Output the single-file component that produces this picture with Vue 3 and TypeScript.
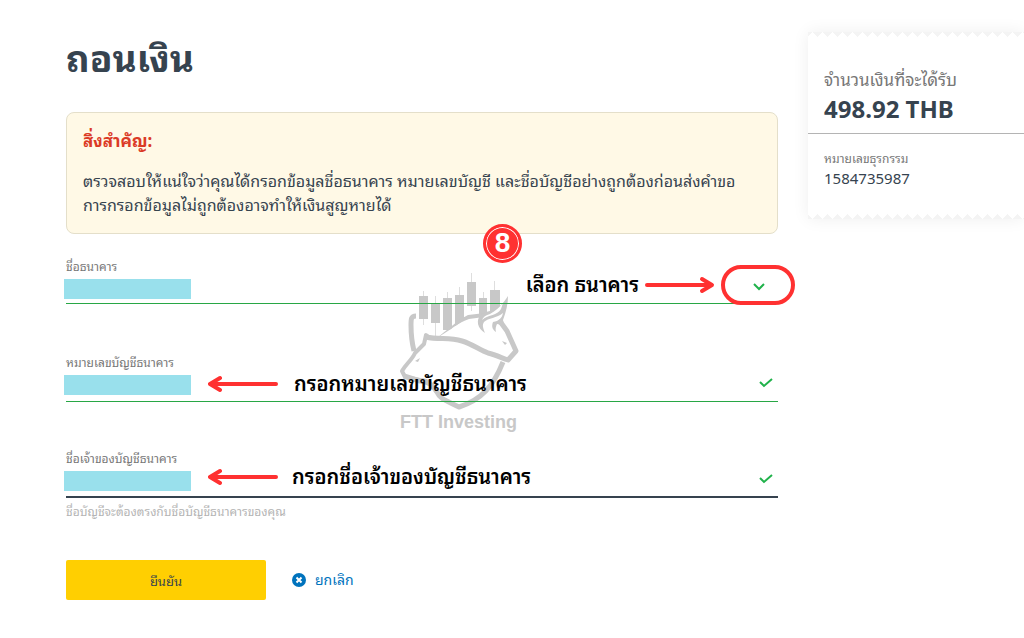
<script setup lang="ts">
import { ref } from 'vue'

const bank = ref('')
const accountNumber = ref('')
const accountHolder = ref('')
</script>

<template>
  <div class="page">
    <main class="content">
      <h1>ถอนเงิน</h1>

      <section class="notice">
        <h2>สิ่งสำคัญ:</h2>
        <p>
          ตรวจสอบให้แน่ใจว่าคุณได้กรอกข้อมูลชื่อธนาคาร หมายเลขบัญชี และชื่อบัญชีอย่างถูกต้องก่อนส่งคำขอ<br />
          การกรอกข้อมูลไม่ถูกต้องอาจทำให้เงินสูญหายได้
        </p>
      </section>

      <form class="form" @submit.prevent>
        <svg class="watermark" viewBox="0 0 120 165" aria-hidden="true">
          <path fill="#dedede" d="M23 19h1v34h-1zM35 24h1v42h-1zM47 20h1v40h-1zM59 15h1v35h-1zM71 1h1v38h-1zM83 20h1v25h-1zM94 9h1v30h-1z" />
          <path fill="#c8c8c8" d="M19 24h9v23h-9zM31 31h9v20h-9zM43 26h9v32h-9zM55 23h9v31h-9zM67 10h9v24h-9zM79 26h8v20h-8zM90 18h10v22h-10z" />
          <path fill="#fff" d="M34 66L51 57 67 46 84 43 97 38 108 25 103 43 108 58 117 78 108 88 60 68z" />
          <g fill="none" stroke="#c8c8c8" stroke-width="5" stroke-linejoin="round">
            <path d="M16 44c-5 0-5 3-5 9 0 9 1 18 3 26" />
            <path d="M26 65c13 3 23 0 36 4 10 3 18 9 26 12 8 2 14 5 20 7l8-9-9-20-8-11" />
            <path stroke-width="4" d="M30 66l-4-3-2 9-9 9c-3 7-9 11-13 18l3 6 15 3c9 0 13 5 17 12" />
            <path d="M4 104l16 5c9 0 13 5 17 11 3 7 8 8 22 15 22-7 34-20 44-45" />
          </g>
          <path fill="#c8c8c8" d="M35 67c12-8 22-19 33-24l17-2-1 4-15 2c-12 4-21 13-34 20z" />
          <path fill="#c8c8c8" d="M108 24c-5 8-9 12-18 15-9 2-13 6-12 13 1 4 3 6 7 9-2-5-3-8-1-11 4-4 13-4 19-9-1 5-4 8-10 9-2 5 0 8 3 10-1-3 0-6 1-8 4 0 6 4 9 8l-3-12c3-8 5-16 5-24z" />
          <path fill="#fff" d="M103 31c-4 5-8 8-13 11-4 1-7 3-8 6 7-6 15-4 19-11z" />
          <path fill="#c8c8c8" d="M15 89l5-3-2 4zM102 69l5 2-2 2z" />
          <text x="0" y="156">FTT Investing</text>
        </svg>

        <div class="field">
          <label for="bank">ชื่อธนาคาร</label>
          <div class="control">
            <select id="bank" v-model="bank"><option value=""></option></select>
            <span class="mask"></span>
            <svg class="mark chevron" viewBox="0 0 14 10"><path d="M2 2l5 5 5-5" /></svg>
          </div>
        </div>
        <div class="field">
          <label for="number">หมายเลขบัญชีธนาคาร</label>
          <div class="control">
            <input id="number" v-model="accountNumber" type="text" />
            <span class="mask"></span>
            <svg class="mark" viewBox="0 0 14 10"><path d="M1 4l4 4 8-7" /></svg>
          </div>
        </div>
        <div class="field active">
          <label for="holder">ชื่อเจ้าของบัญชีธนาคาร</label>
          <div class="control">
            <input id="holder" v-model="accountHolder" type="text" aria-describedby="hint" />
            <span class="mask"></span>
            <svg class="mark" viewBox="0 0 14 10"><path d="M1 4l4 4 8-7" /></svg>
          </div>
          <small id="hint">ชื่อบัญชีจะต้องตรงกับชื่อบัญชีธนาคารของคุณ</small>
        </div>

        <div class="actions">
          <button class="confirm" type="submit">ยืนยัน</button>
          <button class="cancel" type="button">
            <svg viewBox="0 0 14 14" width="14" height="14"><circle cx="7" cy="7" r="7" fill="#0073bd" /><path d="M4.5 4.5l5 5m0-5l-5 5" stroke="#fff" stroke-width="2" /></svg>
            ยกเลิก
          </button>
        </div>

        <div class="step">8</div>
        <div class="note note-bank">
          <span>เลือก ธนาคาร</span>
          <svg class="arrow" viewBox="0 0 70 20"><path d="M2 10h64M57 4l10 6-10 6" /></svg>
          <i class="ring"></i>
        </div>
        <div class="note note-number">
          <svg class="arrow" viewBox="0 0 70 20"><path d="M68 10H4M12 4L2 10l10 6" /></svg>
          <span>กรอกหมายเลขบัญชีธนาคาร</span>
        </div>
        <div class="note note-holder">
          <svg class="arrow" viewBox="0 0 70 20"><path d="M68 10H4M12 4L2 10l10 6" /></svg>
          <span>กรอกชื่อเจ้าของบัญชีธนาคาร</span>
        </div>
      </form>
    </main>

    <aside class="receipt">
      <div class="total">
        <span>จำนวนเงินที่จะได้รับ</span>
        <strong>498.92 THB</strong>
      </div>
      <div class="transaction">
        <span>หมายเลขธุรกรรม</span>
        <b>1584735987</b>
      </div>
    </aside>
  </div>
</template>

<style>
body { margin: 0; background: #fff; overflow-x: hidden; }
</style>

<style scoped>
* { box-sizing: border-box; }
.page {
  --sans: "Noto Sans", "Noto Sans Thai Looped", "Noto Looped Thai", Loma, Waree, Garuda, "Noto Sans Thai", sans-serif;
  display: flex;
  align-items: flex-start;
  gap: 30px;
  padding: 32px 0 38px 66px;
  color: #36434f;
  font-family: var(--sans);
}
.content { flex: 1; min-width: 0; }
h1 { margin: 0 0 28px; font-size: 37px; line-height: 52px; font-weight: 700; }
.notice {
  padding: 16px;
  border: 1px solid #e4dfca;
  border-radius: 8px;
  background: #fff9e6;
}
.notice h2 { margin: 0 0 16px; color: #db3b26; font-size: 17px; line-height: 24px; }
.notice p { margin: 0; font-size: 16px; line-height: 24px; }
.form { position: relative; padding-top: 24px; }
.field { height: 96px; }
.field label { display: block; font-size: 12px; line-height: 18px; color: #777; }
.control { position: relative; }
.control input, .control select {
  display: block;
  width: 100%;
  height: 28px;
  padding: 0;
  border: 0;
  border-bottom: 1px solid #28a745;
  border-radius: 0;
  outline: 0;
  appearance: none;
  background: transparent;
  font: inherit;
}
.control input { height: 30px; }
.field.active input { border-bottom: 2px solid #36434f; }
.field small { display: block; margin-top: 5px; font-size: 12px; line-height: 18px; color: #b4b4b4; }
.mask { position: absolute; left: -2px; top: 3px; width: 127px; height: 20px; background: #99e0ec; }
.mark { position: absolute; right: 5px; top: 6px; width: 14px; height: 10px; fill: none; stroke: #20b24b; stroke-width: 2; }
.mark.chevron { right: 12px; }
.actions { display: flex; align-items: center; gap: 26px; margin-top: 14px; }
.confirm { width: 200px; height: 40px; border: 0; border-radius: 2px; background: #ffcf01; color: #36434f; font: 13px var(--sans); }
.cancel { display: flex; align-items: center; gap: 9px; padding: 0; border: 0; background: none; color: #0073bd; font: 14px/20px var(--sans); }
.watermark { position: absolute; left: 334px; top: 38px; width: 120px; height: 165px; overflow: visible; }
.watermark text { fill: #c8c8c8; font: 700 18px "Liberation Sans", sans-serif; }
.step {
  position: absolute;
  left: 417px;
  top: -10px;
  width: 39px;
  height: 39px;
  border: 3px solid #ff3131;
  border-radius: 50%;
  background: #ff3131;
  box-shadow: inset 0 0 0 1px #fff;
  color: #fff;
  font: 700 28px/32px "Liberation Sans", sans-serif;
  text-align: center;
}
.note { position: absolute; display: flex; align-items: center; color: #000; font-size: 20px; line-height: 30px; font-weight: 600; white-space: nowrap; }
.arrow { width: 70px; height: 20px; fill: none; stroke: #ff3131; stroke-width: 4; stroke-linecap: round; stroke-linejoin: round; }
.note-bank { right: -17px; top: 31px; gap: 6px; }
.ring { width: 74px; height: 40px; border: 4px solid #ff3131; border-radius: 20px; }
.note-number { left: 142px; top: 135px; gap: 16px; }
.note-holder { left: 142px; top: 228px; gap: 14px; }
.receipt {
  width: 216px;
  min-height: 187px;
  background:
    linear-gradient(135deg, #f4f4f4 25%, transparent 25%) 0 0 / 10px 10px repeat-x,
    linear-gradient(225deg, #f4f4f4 25%, transparent 25%) 0 0 / 10px 10px repeat-x,
    linear-gradient(45deg, #f4f4f4 25%, transparent 25%) 0 100% / 10px 10px repeat-x,
    linear-gradient(315deg, #f4f4f4 25%, transparent 25%) 0 100% / 10px 10px repeat-x,
    #fff;
  box-shadow: 0 0 16px #0001;
}
.total { padding: 36px 16px 7px; border-bottom: 1px solid #b4b4b4; }
.receipt span { display: block; color: #777; }
.total span { font-size: 17px; line-height: 24px; }
.total strong { display: block; font-size: 24px; line-height: 34px; }
.transaction { padding: 16px; }
.transaction span { font-size: 12px; line-height: 18px; }
.transaction b { display: block; font-size: 15px; line-height: 20px; font-weight: 400; }
</style>
